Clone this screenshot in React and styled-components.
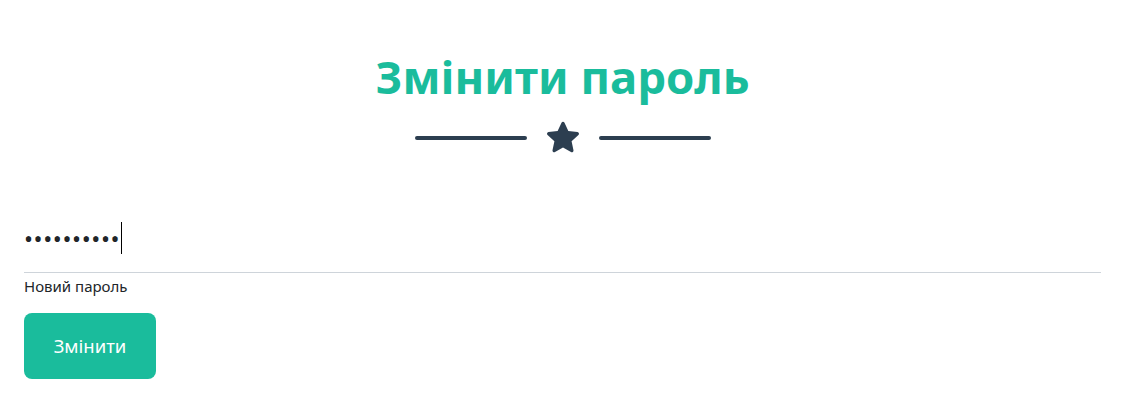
import React from 'react'
import styled, { createGlobalStyle } from 'styled-components'

const GlobalStyle = createGlobalStyle`
  body {
    margin: 0;
    background: #fff;
    font-family: 'Noto Sans', 'Open Sans', sans-serif;
    color: #212529;
  }
`

export default function App() {
  return (
    <>
      <GlobalStyle />
      <Section>
        <Heading>Змінити пароль</Heading>
        <Divider>
          <Line />
          <Star viewBox="0 0 24 24">
            <path d="M12 2.2c.4 0 .75.23.9.6l2.3 5.05 5.5.6c.4.05.73.32.85.7.12.38 0 .8-.3 1.06l-4.1 3.72 1.14 5.42c.08.4-.08.8-.4 1.03-.33.24-.76.26-1.1.06L12 17.7l-4.8 2.74c-.34.2-.77.18-1.1-.06-.32-.23-.48-.63-.4-1.03l1.14-5.420-4.1-3.72c-.3-.27-.42-.68-.3-1.06.12-.38.45-.65.85-.7l5.5-.6L11.1 2.8c.15-.37.5-.6.9-.6z" />
          </Star>
          <Line />
        </Divider>
        <Form onSubmit={(e) => e.preventDefault()}>
          <Field>
            <Input type="password" defaultValue="1234567890" />
            <Caret />
            <Label>Новий пароль</Label>
          </Field>
          <Button type="submit">Змінити</Button>
        </Form>
      </Section>
    </>
  )
}

const Section = styled.div`
  padding: 49px 24px 24px;
`

const Heading = styled.h2`
  margin: 0;
  text-align: center;
  color: #1abc9c;
  font-size: 45.5px;
  font-weight: 700;
  line-height: 1.2;
`

const Divider = styled.div`
  display: flex;
  align-items: center;
  justify-content: center;
  gap: 16px;
  margin-top: 14px;
`

const Line = styled.div`
  width: 112px;
  height: 4px;
  border-radius: 2px;
  background: #2c3e50;
`

const Star = styled.svg`
  width: 40px;
  height: 40px;
  fill: #2c3e50;
`

const Form = styled.form`
  margin-top: 62px;
`

const Field = styled.div`
  position: relative;
  display: flex;
  flex-direction: column;
`

const Input = styled.input`
  border: none;
  border-bottom: 1px solid #ced4da;
  padding: 0 0 15px;
  height: 53px;
  box-sizing: border-box;
  font-family: inherit;
  font-size: 24px;
  letter-spacing: 0.6px;
  color: #212529;
  outline: none;
  background: transparent;
`

const Caret = styled.span`
  position: absolute;
  left: 97px;
  top: 2px;
  width: 1px;
  height: 32px;
  background: #000;
`

const Label = styled.label`
  margin-top: 3px;
  font-size: 15px;
  color: #212529;
`

const Button = styled.button`
  margin-top: 17px;
  width: 132px;
  height: 66px;
  border: none;
  border-radius: 8px;
  background: #1abc9c;
  color: #fff;
  font-family: inherit;
  font-size: 18.5px;
`
